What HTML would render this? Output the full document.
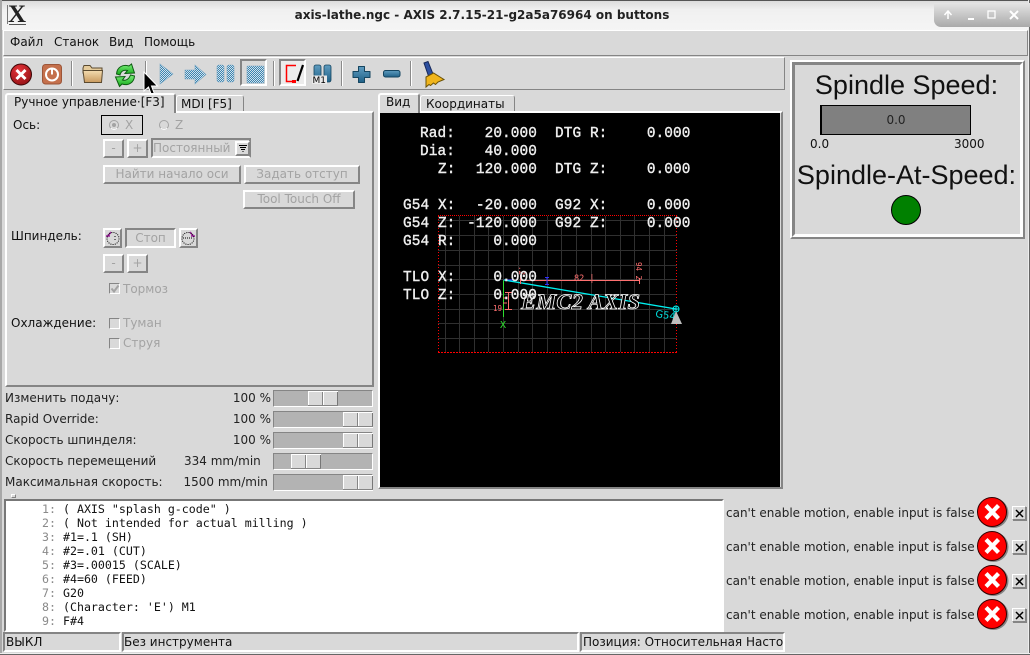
<!DOCTYPE html>
<html><head><meta charset="utf-8">
<style>
html,body{margin:0;padding:0;background:#d9d9d9;}
#w{position:relative;width:1030px;height:655px;overflow:hidden;background:#d9d9d9;font-family:"DejaVu Sans",sans-serif;font-size:12px;color:#111;}
#w div,#w span.a{position:absolute;box-sizing:border-box;white-space:pre;}
.r{border:2px solid;border-color:#fff #858585 #858585 #fff;background:#d9d9d9;}
.s{border:2px solid;border-color:#858585 #fff #fff #858585;background:#d9d9d9;}
.b{border:2px solid;border-color:#fff #858585 #858585 #fff;background:#d9d9d9;color:#a3a3a3;text-align:center;line-height:15px;}
.l{line-height:14px;height:14px;}
.d{color:#a3a3a3;line-height:14px;height:14px;}
.sep{width:2px;height:25px;top:61px;background:linear-gradient(90deg,#8a8a8a 50%,#fff 50%);}
.t{background:#b3b3b3;left:273px;width:100px;height:17px;border-left:1px solid #858585;border-top:1px solid #858585;border-right:1px solid #fff;border-bottom:1px solid #fff;}
.h{background:linear-gradient(90deg,#fff 0,#fff 1px,#d9d9d9 1px,#d9d9d9 14px,#858585 14px,#858585 15px,#fff 15px,#fff 16px,#d9d9d9 16px,#d9d9d9 29px,#777 29px,#777 30px);width:30px;height:15px;top:0;border-top:1px solid #fff;border-bottom:1px solid #858585;}
.g{font-family:"Liberation Mono",monospace;font-weight:normal;-webkit-text-stroke:.4px #eee;font-size:14.4px;letter-spacing:.1px;color:#eee;line-height:18px;height:18px;}
.c{font-family:"DejaVu Sans Mono",monospace;font-size:11.62px;line-height:14px;height:14px;color:#111;}
.n{color:#8a8a8a;}
.m{left:726px;line-height:14px;height:14px;font-size:12px;color:#222;}
.x{left:1012px;width:14px;height:14px;border:1px solid;border-color:#fff #858585 #858585 #fff;box-shadow:1px 1px 0 #858585;}
.x svg{position:absolute;left:2px;top:2px;}
</style></head><body>
<div id="w">

<!-- title bar -->
<div style="left:0;top:0;width:1030px;height:30px;background:linear-gradient(#dcdcdc 0,#f0f0f0 30%,#f5f5f5 100%);border-top:1px solid #555;"></div>
<div style="left:0;top:0;width:2px;height:655px;background:#a8a8a8;"></div>
<div style="left:1028px;top:0;width:2px;height:655px;background:linear-gradient(90deg,#eee 50%,#666 50%);"></div>
<div style="left:0;top:653px;width:1030px;height:2px;background:linear-gradient(#eee 50%,#666 50%);"></div>
<div style="left:7px;top:0;height:28px;width:20px;font-family:'Liberation Serif',serif;font-weight:bold;font-size:25px;line-height:30px;text-align:center;color:#222;">X</div>
<div style="left:7px;top:5px;width:1px;height:19px;background:#777;"></div>
<div style="left:9px;top:24px;width:17px;height:1px;background:#555;"></div>
<div style="left:282px;top:8px;width:400px;font-weight:bold;font-size:12px;line-height:14px;height:14px;color:#222;text-align:center;">axis-lathe.ngc - AXIS 2.7.15-21-g2a5a76964 on buttons</div>
<div style="left:934px;top:3px;width:96px;height:24px;background:linear-gradient(#e4e4e4,#a9a9a9);border-bottom-left-radius:7px;"></div>
<svg style="position:absolute;left:934px;top:3px" width="96" height="24" fill="none" stroke="#fff" stroke-width="1.5"><path d="M14 16V9M10.500 12L14 8l3.500 4"/><path d="M34 16h6" stroke-width="2"/><rect x="54" y="8" width="7" height="7" stroke-width="1.300"/><path d="M76 8l8 8M84 8l-8 8" stroke-width="2"/></svg>

<!-- menu -->
<div style="left:3px;top:30px;width:1025px;height:26px;background:#d9d9d9;border-top:1px solid #fff;border-left:1px solid #fff;border-right:1px solid #858585;border-bottom:1px solid #858585;"></div>
<div class="l" style="left:10px;top:35px;">Файл</div>
<div class="l" style="left:54px;top:35px;">Станок</div>
<div class="l" style="left:109px;top:35px;">Вид</div>
<div class="l" style="left:144px;top:35px;">Помощь</div>

<!-- toolbar -->
<div style="left:3px;top:57px;width:782px;height:33px;border-top:1px solid #fff;border-left:1px solid #fff;border-right:1px solid #858585;border-bottom:1px solid #858585;"></div>
<div class="sep" style="left:71px;"></div>
<div class="sep" style="left:145px;"></div>
<div class="sep" style="left:273px;"></div>
<div class="sep" style="left:341px;"></div>
<div class="sep" style="left:410px;"></div>
<div class="s" style="left:240px;top:59px;width:27px;height:27px;"></div>
<div class="s" style="left:279px;top:59px;width:27px;height:27px;background:#ececec;"></div>
<svg style="position:absolute;left:0;top:57px" width="460" height="44">
<defs>
<pattern id="p" width="2" height="2" patternUnits="userSpaceOnUse"><rect width="2" height="2" fill="#d3e2ec"/><rect width="1" height="1" fill="#3a84b0"/><rect x="1" y="1" width="1" height="1" fill="#3a84b0"/></pattern>
<linearGradient id="f" x1="0" y1="0" x2="0" y2="1"><stop offset="0" stop-color="#f3dcb0"/><stop offset="1" stop-color="#c99a5e"/></linearGradient>
<radialGradient id="rg" cx=".4" cy=".3" r=".8"><stop offset="0" stop-color="#e8343a"/><stop offset="1" stop-color="#8d0f12"/></radialGradient>
<linearGradient id="bl" x1="0" y1="0" x2="0" y2="1"><stop offset="0" stop-color="#5f9cc0"/><stop offset="1" stop-color="#1f6187"/></linearGradient>
<linearGradient id="gr" x1="0" y1="0" x2="0" y2="1"><stop offset="0" stop-color="#7cf07c"/><stop offset="1" stop-color="#14a818"/></linearGradient>
</defs>
<circle cx="21" cy="17.500" r="10.500" fill="url(#rg)" stroke="#3a0506" stroke-width="1"/>
<path d="M16.500 13l9 9M25.500 13l-9 9" stroke="#fff" stroke-width="3"/>
<rect x="42.500" y="7.500" width="19" height="19.500" rx="3" fill="#c4704c" stroke="#9c5538"/>
<circle cx="52" cy="17.500" r="6" fill="none" stroke="#fff" stroke-width="2"/>
<path d="M52 11.500v6" stroke="#fff" stroke-width="2"/>
<path d="M83 11l1-2.500h6l2 2.500h10v5H83z" fill="#e5cb9b" stroke="#5a4a30" stroke-width="1"/>
<path d="M83 13.500h19.500l-1 12H84.500z" fill="url(#f)" stroke="#5a4a30" stroke-width="1"/>
<path d="M116.500 17C117 10 123 7 129 9L131.500 7l3 9-9.500.5 2.500-3c-3.500-1-6.500.5-7.500 4.500z" fill="url(#gr)" stroke="#0c5a10" stroke-width="1"/>
<path d="M134.500 19C134 26 128 29 122 27l-2.500 2.500-4-9.500 9.500-.5-2.500 3.500c3.500 1 6.500-1 8-5z" fill="url(#gr)" stroke="#0c5a10" stroke-width="1"/>
<path d="M160 7l13 10-13 10z" fill="url(#p)" stroke="#7aa8c4" stroke-width=".6"/>
<path d="M185 13h10V8l11 9.500-11 9.500v-5h-10z" fill="url(#p)" stroke="#7aa8c4" stroke-width=".6"/>
<rect x="217" y="8" width="7" height="17" rx="2" fill="url(#p)" stroke="#7aa8c4" stroke-width=".6"/>
<rect x="227" y="8" width="7" height="17" rx="2" fill="url(#p)" stroke="#7aa8c4" stroke-width=".6"/>
<rect x="247" y="9" width="17" height="17" rx="1" fill="url(#p)" stroke="#7aa8c4" stroke-width=".6"/>
<path d="M296 8.500h-9.500v16h7" fill="none" stroke="#f00" stroke-width="1.500"/>
<path d="M292 23h4v3h-4z" fill="#f00"/>
<path d="M303 8l-5.500 16" stroke="#000" stroke-width="2.200"/>
<rect x="314" y="8" width="7" height="17" rx="2" fill="url(#bl)" stroke="#154560" stroke-width=".8"/>
<rect x="324" y="8" width="7" height="17" rx="2" fill="url(#bl)" stroke="#154560" stroke-width=".8"/>
<rect x="312" y="18.500" width="15" height="8.500" fill="#e9e9e9"/>
<text x="312.500" y="26" font-family="DejaVu Sans" font-size="9" fill="#000">M1</text>
<path d="M358.500 9.500h6v5h5.500v6h-5.500v5h-6v-5H353v-6h5.500z" fill="url(#bl)" stroke="#154560" stroke-width="1" stroke-linejoin="round"/>
<rect x="383.500" y="13.500" width="16.500" height="6.500" rx="2" fill="url(#bl)" stroke="#154560" stroke-width="1"/>
<path d="M424 6l4-1.500 5 12.500-4.500 2z" fill="#2c4fa0" stroke="#16285a" stroke-width="1"/>
<path d="M426 20l7.500-4 10.500 6.500-6 2.500-2.500 2.500-2-1.500-3 2.500-1.500-1-3 2.500z" fill="#f0b51c" stroke="#6b5208" stroke-width="1"/>
</svg>
<svg style="position:absolute;left:143px;top:71px" width="16" height="30"><path d="M1 1v19l4.500-4 3 8 3-1-3-8h6z" fill="#000" stroke="#fff" stroke-width="1"/></svg>

<!-- left tabs -->
<div style="left:5px;top:111px;width:369px;height:276px;border:2px solid;border-color:#fff #858585 #858585 #fff;"></div>
<div style="left:5px;top:93px;width:171px;height:20px;background:#d9d9d9;border:2px solid;border-bottom:0;border-color:#fff #858585 #d9d9d9 #fff;border-radius:3px 3px 0 0;"></div>
<div class="l" style="left:14px;top:95px;">Ручное управление·[F3]</div>
<div style="left:176px;top:95px;width:68px;height:16px;background:#d9d9d9;border:1px solid;border-bottom:0;border-color:#fff #858585 #d9d9d9 #fff;border-radius:3px 3px 0 0;"></div>
<div class="l" style="left:181px;top:97px;">MDI [F5]</div>

<div class="l" style="left:13px;top:118px;">Ось:</div>
<div style="left:101px;top:115px;width:42px;height:20px;border:1px solid #000;"></div>
<svg style="position:absolute;left:107px;top:118px" width="70" height="14" fill="none"><circle cx="7" cy="7" r="4.500" stroke="#a3a3a3"/><circle cx="7" cy="7" r="2" fill="#a3a3a3"/><circle cx="57" cy="7" r="4.500" stroke="#a3a3a3"/><path d="M3.800 10.200a4.500 4.500 0 0 0 6.400 0M53.800 10.200a4.500 4.500 0 0 0 6.400 0" stroke="#fff"/></svg>
<div class="d" style="left:125px;top:118px;">X</div>
<div class="d" style="left:175px;top:118px;">Z</div>

<div class="b" style="left:103px;top:139px;width:21px;height:19px;">-</div>
<div class="b" style="left:127px;top:139px;width:21px;height:19px;">+</div>
<div class="s" style="left:151px;top:138px;width:100px;height:20px;border-color:#858585 #858585 #fff #858585;"></div>
<div class="d" style="left:153px;top:141px;">Постоянный</div>
<div class="r" style="left:235px;top:141px;width:15px;height:15px;"></div>
<svg style="position:absolute;left:238px;top:145px" width="10" height="8"><path d="M1 .5h8M2 2.500h6M3 4.500h4M4.500 6.500h1" stroke="#000" stroke-width="1"/></svg>

<div class="b" style="left:103px;top:165px;width:138px;height:19px;">Найти начало оси</div>
<div class="b" style="left:244px;top:165px;width:116px;height:19px;">Задать отступ</div>
<div class="b" style="left:243px;top:190px;width:112px;height:19px;">Tool Touch Off</div>

<div class="l" style="left:11px;top:229px;">Шпиндель:</div>
<div class="r" style="left:103px;top:228px;width:19px;height:20px;"></div>
<div class="s" style="left:125px;top:228px;width:51px;height:20px;border-color:#858585 #fff #fff #858585;color:#a3a3a3;text-align:center;line-height:16px;">Стоп</div>
<div class="r" style="left:179px;top:228px;width:19px;height:20px;"></div>
<svg style="position:absolute;left:104px;top:230px" width="17" height="17" fill="none"><path d="M3 7l4-5M2 6h4" stroke="#a020a0" stroke-width="1.500"/><circle cx="9" cy="8.500" r="6" stroke="#000" stroke-dasharray="1 1.200"/><path d="M11 6v1M11 9v1" stroke="#000"/></svg>
<svg style="position:absolute;left:180px;top:230px" width="17" height="17" fill="none"><path d="M14 7l-4-5M15 6h-4" stroke="#a020a0" stroke-width="1.500"/><circle cx="8" cy="8.500" r="6" stroke="#000" stroke-dasharray="1 1.200"/><path d="M3 8h10" stroke="#000" stroke-dasharray="1 1"/></svg>

<div class="b" style="left:103px;top:254px;width:21px;height:19px;">-</div>
<div class="b" style="left:127px;top:254px;width:21px;height:19px;">+</div>

<div style="left:109px;top:283px;width:11px;height:11px;border:1px solid;border-color:#858585 #fff #fff #858585;"></div>
<svg style="position:absolute;left:110px;top:284px" width="10" height="10"><path d="M1.500 4.500l2.500 3 4.500-6" fill="none" stroke="#a3a3a3" stroke-width="2"/></svg>
<div class="d" style="left:123px;top:282px;">Тормоз</div>

<div class="l" style="left:11px;top:316px;">Охлаждение:</div>
<div style="left:109px;top:318px;width:11px;height:11px;border:1px solid;border-color:#858585 #fff #fff #858585;"></div>
<div class="d" style="left:123px;top:316px;">Туман</div>
<div style="left:109px;top:338px;width:11px;height:11px;border:1px solid;border-color:#858585 #fff #fff #858585;"></div>
<div class="d" style="left:123px;top:336px;">Струя</div>

<!-- sliders -->
<div class="l" style="left:5px;top:391px;color:#222;">Изменить подачу:</div>
<div class="l" style="left:5px;top:412px;color:#222;">Rapid Override:</div>
<div class="l" style="left:5px;top:433px;color:#222;">Скорость шпинделя:</div>
<div class="l" style="left:5px;top:454px;color:#222;">Скорость перемещений</div>
<div class="l" style="left:5px;top:475px;color:#222;">Максимальная скорость:</div>
<div class="l" style="left:221px;width:50px;text-align:right;top:391px;color:#222;">100 %</div>
<div class="l" style="left:221px;width:50px;text-align:right;top:412px;color:#222;">100 %</div>
<div class="l" style="left:221px;width:50px;text-align:right;top:433px;color:#222;">100 %</div>
<div class="l" style="left:184px;top:454px;color:#222;">334 mm/min</div>
<div class="l" style="left:183.500px;top:475px;color:#222;">1500 mm/min</div>
<div class="t" style="top:390px;"><div class="h" style="left:34px;"></div></div>
<div class="t" style="top:411px;"><div class="h" style="left:69px;"></div></div>
<div class="t" style="top:432px;"><div class="h" style="left:69px;"></div></div>
<div class="t" style="top:453px;"><div class="h" style="left:17px;"></div></div>
<div class="t" style="top:474px;"><div class="h" style="left:69px;"></div></div>

<div style="left:11px;top:494px;width:5px;height:4px;border:1px solid;border-color:#fff #858585 #858585 #fff;"></div>

<!-- code -->
<div style="left:4px;top:499px;width:720px;height:133px;background:#fff;border:2px solid;border-color:#777 #fff #fff #777;"></div>
<div class="c" style="left:42px;top:502px;"><span class="n">1:</span> ( AXIS "splash g-code" )</div>
<div class="c" style="left:42px;top:516px;"><span class="n">2:</span> ( Not intended for actual milling )</div>
<div class="c" style="left:42px;top:530px;"><span class="n">3:</span> #1=.1 (SH)</div>
<div class="c" style="left:42px;top:544px;"><span class="n">4:</span> #2=.01 (CUT)</div>
<div class="c" style="left:42px;top:558px;"><span class="n">5:</span> #3=.00015 (SCALE)</div>
<div class="c" style="left:42px;top:572px;"><span class="n">6:</span> #4=60 (FEED)</div>
<div class="c" style="left:42px;top:586px;"><span class="n">7:</span> G20</div>
<div class="c" style="left:42px;top:600px;"><span class="n">8:</span> (Character: 'E') M1</div>
<div class="c" style="left:42px;top:614px;"><span class="n">9:</span> F#4</div>

<!-- status -->
<div class="s" style="left:3px;top:632px;width:118px;height:20px;"></div>
<div class="l" style="left:6px;top:635px;">ВЫКЛ</div>
<div class="s" style="left:122px;top:632px;width:457px;height:20px;"></div>
<div class="l" style="left:124px;top:635px;">Без инструмента</div>
<div class="s" style="left:580px;top:632px;width:205px;height:20px;overflow:hidden;"><div class="l" style="left:1px;top:1px;">Позиция: Относительная Настоящая</div></div>

<!-- right tabs -->
<div style="left:378px;top:111px;width:405px;height:378px;border:2px solid;border-color:#fff #858585 #858585 #fff;"></div>
<div style="left:378px;top:93px;width:42px;height:20px;background:#d9d9d9;border:2px solid;border-bottom:0;border-color:#fff #858585 #d9d9d9 #fff;border-radius:3px 3px 0 0;"></div>
<div class="l" style="left:386px;top:95px;">Вид</div>
<div style="left:420px;top:95px;width:95px;height:16px;background:#d9d9d9;border:1px solid;border-bottom:0;border-color:#fff #858585 #d9d9d9 #fff;border-radius:3px 3px 0 0;"></div>
<div class="l" style="left:426px;top:97px;">Координаты</div>

<!-- canvas -->
<div style="left:380px;top:113px;width:400px;height:374px;background:#000;"></div>
<svg style="position:absolute;left:380px;top:113px" width="400" height="374">
<g transform="translate(-380,-113)">
<g stroke="#303030" stroke-width="1">
<path d="M445.500 216V352M459.500 216V352M474.500 216V352M488.500 216V352M503.500 216V352M518.500 216V352M532.500 216V352M547.500 216V352M561.500 216V352M576.500 216V352M591.500 216V352M605.500 216V352M620.500 216V352M634.500 216V352M649.500 216V352M664.500 216V352"/>
<path d="M438 220.500H677M438 235.500H677M438 250.500H677M438 265.500H677M438 279.500H677M438 294.500H677M438 309.500H677M438 323.500H677M438 338.500H677"/>
</g>
<path d="M438.500 216V352M676.500 216V352" stroke="#f00" stroke-dasharray="1 2" fill="none"/>
<path d="M438 215.500H677" stroke="#f00" stroke-dasharray="1 1" fill="none"/>
<path d="M438 352.500H677" stroke="#f00" stroke-dasharray="2 1"/>
<path d="M503.500 280V317" stroke="#2ee02e"/>
<text x="500" y="328" font-family="DejaVu Sans Mono" font-size="10" fill="#2ee02e">X</text>
<path d="M503.500 280H513" stroke="#3030ff" stroke-width="1"/>
<path d="M504 280L676 309" stroke="#00f0f0" stroke-width="1.300"/>
<path d="M520 280.500H639M520.500 275V284M639.500 278V284" stroke="#ff7070" fill="none"/>
<path d="M545 277.500h4M547 277.500v7M545 284.500h4" stroke="#3030ff" fill="none"/>
<text x="574" y="281" font-family="DejaVu Sans Mono" font-size="8.500" fill="#ff7070">82 |</text>
<text transform="translate(519,266) rotate(90)" x="0" y="0" font-family="DejaVu Sans Mono" font-size="7.500" fill="#ff7070">.2</text>
<text transform="translate(636,262) rotate(90)" x="0" y="0" font-family="DejaVu Sans Mono" font-size="7.500" fill="#ff7070">94 2</text>
<path d="M505 292.500h7M508.500 292.500v17M505 309.500h7" stroke="#ff7070" fill="none"/>
<path d="M503 298h4M503 303h4" stroke="#ff7070" fill="none"/>
<text x="493" y="311" font-family="DejaVu Sans Mono" font-size="7.500" fill="#ff7070">19</text>
<text x="521" y="309" font-family="Liberation Serif" font-weight="bold" font-style="italic" font-size="22.500" fill="#000" stroke="#fff" stroke-width=".8" textLength="119">EMC2 AXIS</text>
<text transform="translate(655,317) rotate(8)" font-family="DejaVu Sans" font-size="10" fill="#00e0e0">G54</text>
<circle cx="676" cy="309" r="3" fill="none" stroke="#00f0f0"/>
<path d="M672.500 309h7M676 305.500v7" stroke="#00f0f0"/>
<path d="M676 311l6 13h-11z" fill="#bdbdbd"/>
</g>
</svg>

<div class="g" style="left:420px;top:125px;">Rad:</div><div class="g" style="left:436px;width:101px;text-align:right;top:125px;">20.000</div><div class="g" style="left:555px;top:125px;">DTG R:</div><div class="g" style="left:589.500px;width:101px;text-align:right;top:125px;">0.000</div>
<div class="g" style="left:420px;top:143px;">Dia:</div><div class="g" style="left:436px;width:101px;text-align:right;top:143px;">40.000</div>
<div class="g" style="left:438px;top:161px;">Z:</div><div class="g" style="left:436px;width:101px;text-align:right;top:161px;">120.000</div><div class="g" style="left:555px;top:161px;">DTG Z:</div><div class="g" style="left:589.500px;width:101px;text-align:right;top:161px;">0.000</div>
<div class="g" style="left:403px;top:197px;">G54 X:</div><div class="g" style="left:436px;width:101px;text-align:right;top:197px;">-20.000</div><div class="g" style="left:555px;top:197px;">G92 X:</div><div class="g" style="left:589.500px;width:101px;text-align:right;top:197px;">0.000</div>
<div class="g" style="left:403px;top:215px;">G54 Z:</div><div class="g" style="left:436px;width:101px;text-align:right;top:215px;">-120.000</div><div class="g" style="left:555px;top:215px;">G92 Z:</div><div class="g" style="left:589.500px;width:101px;text-align:right;top:215px;">0.000</div>
<div class="g" style="left:403px;top:233px;">G54 R:</div><div class="g" style="left:436px;width:101px;text-align:right;top:233px;">0.000</div>
<div class="g" style="left:403px;top:269px;">TLO X:</div><div class="g" style="left:436px;width:101px;text-align:right;top:269px;">0.000</div>
<div class="g" style="left:403px;top:287px;">TLO Z:</div><div class="g" style="left:436px;width:101px;text-align:right;top:287px;">0.000</div>

<!-- spindle panel -->
<div style="left:790px;top:60px;width:235px;height:179px;border:2px solid;border-color:#fff #858585 #858585 #fff;"><div style="left:0;top:0;width:231px;height:175px;border:3px solid;border-color:#858585 #fff #fff #858585;"></div></div>
<div style="left:790px;top:69px;width:233px;text-align:center;font-family:'Liberation Sans',sans-serif;font-size:27px;line-height:32px;height:32px;color:#111;">Spindle Speed:</div>
<div style="left:820px;top:105px;width:151px;height:30px;background:#808080;border:1px solid #000;border-width:1px 1px 1px 2px;text-align:center;line-height:28px;font-size:12px;color:#222;">0.0</div>
<div class="l" style="left:810px;top:137px;">0.0</div>
<div class="l" style="left:954px;top:137px;">3000</div>
<div style="left:790px;top:159px;width:233px;text-align:center;font-family:'Liberation Sans',sans-serif;font-size:27px;line-height:32px;height:32px;color:#111;">Spindle-At-Speed:</div>
<div style="left:891px;top:195px;width:30px;height:30px;border-radius:50%;background:#008000;border:1px solid #000;"></div>

<!-- messages -->
<div class="m" style="top:506px;">can't enable motion, enable input is false</div>
<div class="m" style="top:540px;">can't enable motion, enable input is false</div>
<div class="m" style="top:574px;">can't enable motion, enable input is false</div>
<div class="m" style="top:608px;">can't enable motion, enable input is false</div>
<svg style="position:absolute;left:975px;top:494px" width="36" height="140">
<defs><g id="e"><circle cx="18.500" cy="19" r="15" fill="#858585"/><circle cx="17" cy="18" r="14.500" fill="#f00" stroke="#300" stroke-width="1"/><path d="M11 11.500l12.500 13M23.500 11.500l-12.500 13" stroke="#fff" stroke-width="4.200"/></g></defs>
<use href="#e" x="0" y="0"/><use href="#e" x="0" y="34"/><use href="#e" x="0" y="68"/><use href="#e" x="0" y="102"/>
</svg>
<div class="x" style="top:506px;"><svg width="9" height="9"><path d="M1 1l7 7M8 1l-7 7" stroke="#000" stroke-width="1.500"/></svg></div>
<div class="x" style="top:540px;"><svg width="9" height="9"><path d="M1 1l7 7M8 1l-7 7" stroke="#000" stroke-width="1.500"/></svg></div>
<div class="x" style="top:574px;"><svg width="9" height="9"><path d="M1 1l7 7M8 1l-7 7" stroke="#000" stroke-width="1.500"/></svg></div>
<div class="x" style="top:608px;"><svg width="9" height="9"><path d="M1 1l7 7M8 1l-7 7" stroke="#000" stroke-width="1.500"/></svg></div>
</div>
</body></html>
